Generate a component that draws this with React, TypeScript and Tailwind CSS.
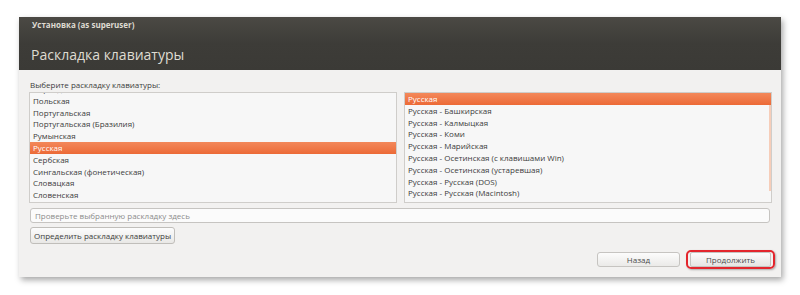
import React from "react";

const left = [
  "Персидская",
  "Польская",
  "Португальская",
  "Португальская (Бразилия)",
  "Румынская",
  "Русская",
  "Сербская",
  "Сингальская (фонетическая)",
  "Словацкая",
  "Словенская",
  "Сомалийская",
];
const right = [
  "Русская",
  "Русская - Башкирская",
  "Русская - Калмыцкая",
  "Русская - Коми",
  "Русская - Марийская",
  "Русская - Осетинская (с клавишами Win)",
  "Русская - Осетинская (устаревшая)",
  "Русская - Русская (DOS)",
  "Русская - Русская (Macintosh)",
  "Русская - Русская (фонетическая клавиатура)",
];

function Row({ text, sel }: { text: string; sel: boolean }) {
  return (
    <div
      className={
        "h-[11.8px] leading-[11.8px] pl-[3px] whitespace-nowrap " +
        (sel
          ? "bg-gradient-to-b from-[#f3885a] to-[#ec6a36] text-white"
          : "text-[#3c3c3c]")
      }
    >
      {text}
    </div>
  );
}

export default function App() {
  return (
    <div
      className="w-[800px] h-[295px] bg-white overflow-hidden pt-[17px] pl-[19px]"
      style={{ fontFamily: '"Open Sans", "Liberation Sans", sans-serif' }}
    >
      <div className="w-[762px] h-[260px] flex flex-col bg-[#f2f1f0] shadow-[2px_3px_6px_rgba(0,0,0,0.35)]">
        <div className="h-[53px] bg-gradient-to-b from-[#4b4944] via-[#3d3c38] to-[#3b3a36] flex flex-col pl-[13px]">
          <div className="mt-[3px] h-[10px] leading-[10px] text-[8px] font-bold text-[#dfdbd2]">
            Установка (as superuser)
          </div>
          <div className="mt-[16px] ml-[-1px] text-[14px] leading-[17px] text-[#dfdbd2]">
            Раскладка клавиатуры
          </div>
        </div>
        <div className="flex-1 flex flex-col pl-[10px] pr-[9px] text-[8px]">
          <div className="h-[22px] pt-[10px] leading-[10px] text-[#3c3c3c] pl-[1px]">
            Выберите раскладку клавиатуры:
          </div>
          <div className="flex gap-[7px] h-[111px]">
            <div className="relative w-[368px] h-full border border-[#cfcdca] bg-[#f7f7f7] overflow-hidden">
              <div className="-mt-[10px]">
                {left.map((t) => (
                  <Row key={t} text={t} sel={t === "Русская"} />
                ))}
              </div>
            </div>
            <div className="relative w-[368px] h-full border border-[#cfcdca] bg-[#f7f7f7] overflow-hidden">
              <div>
                {right.map((t, i) => (
                  <Row key={t} text={t} sel={i === 0} />
                ))}
              </div>
              <div className="absolute right-0 top-[12px] h-[86px] w-[2px] bg-[#f6cdb9]" />
            </div>
          </div>
          <div className="mt-[5px] ml-[1px] w-[740px] h-[15px] border border-[#c6c4c1] rounded-[3px] bg-[#fbfbfb] text-[#8c8c8c] leading-[13px] pl-[4px]">
            Проверьте выбранную раскладку здесь
          </div>
          <div className="mt-[4px] ml-[1px] self-start h-[17px] px-[3px] border border-[#c0beba] rounded-[3px] bg-gradient-to-b from-[#fcfcfc] to-[#e9e8e6] text-[#3c3c3c] leading-[15px] font-medium">
            Определить раскладку клавиатуры
          </div>
          <div className="flex justify-end items-center mt-[6px] -mr-[3px]">
            <div className="w-[83px] h-[15px] border border-[#c6c4c1] rounded-[3px] bg-gradient-to-b from-[#fcfcfc] to-[#ebeae8] text-center leading-[13px] text-[#4c4c4c] font-medium">
              Назад
            </div>
            <div className="ml-[6px] px-[2px] border-2 border-[#e3262d] rounded-[5px] shadow-[1px_1px_2px_rgba(0,0,0,0.3)]">
              <div className="w-[81px] h-[15px] border border-[#c6c4c1] rounded-[2px] bg-gradient-to-b from-[#fcfcfc] to-[#e6e5e3] text-center leading-[13px] text-[#4c4c4c] font-medium">
                Продолжить
              </div>
            </div>
          </div>
        </div>
      </div>
    </div>
  );
}
